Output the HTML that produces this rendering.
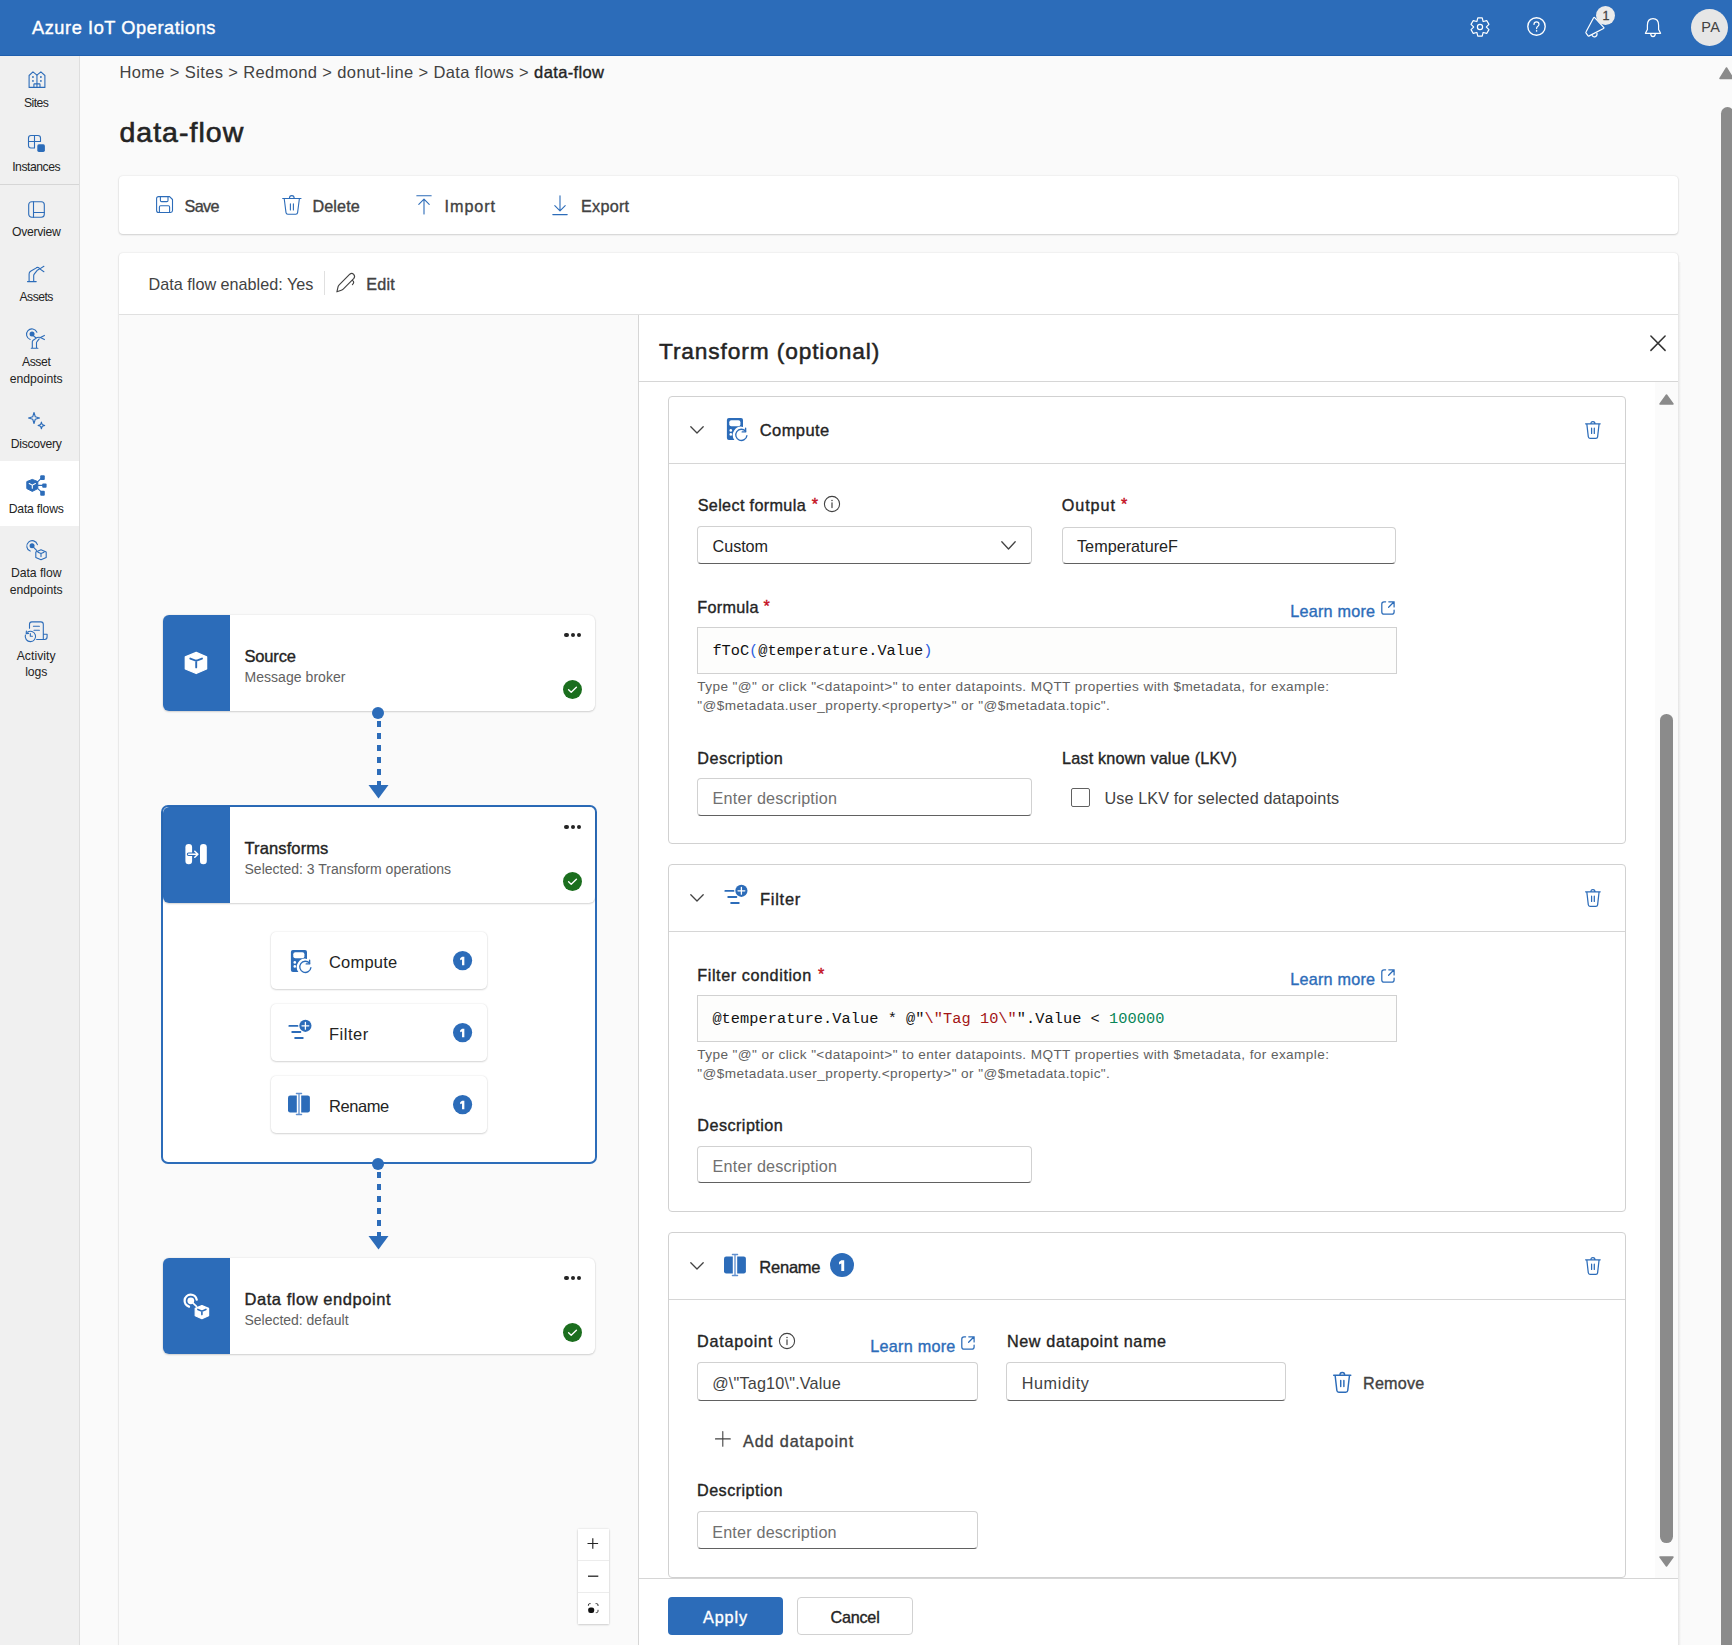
<!DOCTYPE html>
<html><head><meta charset="utf-8">
<style>
*{box-sizing:border-box;margin:0;padding:0}
html,body{width:1732px;height:1645px;overflow:hidden;background:#fafafa;font-family:"Liberation Sans",sans-serif;color:#242424}
.a{position:absolute}
.t{position:absolute;white-space:pre;line-height:1}
svg.i{position:absolute;overflow:visible}
.card{position:absolute;background:#fff;border-radius:4px;box-shadow:0 0 2px rgba(0,0,0,.12),0 1px 2px rgba(0,0,0,.14)}
.inp{position:absolute;background:#fff;border:1px solid #d1d1d1;border-bottom-color:#616161;border-radius:4px}
.sec{position:absolute;left:668px;width:958px;background:#fff;border:1px solid #d1d1d1;border-radius:4px}
.badge{position:absolute;border-radius:50%;background:#2c6cb9}
</style></head><body>
<div class="a" style="left:0;top:0;width:1732px;height:56px;background:#2c6cb9;border-bottom:1px solid #1f5fae"></div>
<div class="a" style="left:1691px;top:8.5px;width:37px;height:37px;border-radius:50%;background:#e6e6e6"></div>
<div class="a" style="left:0;top:56px;width:80px;height:1589px;background:#f0f0f0;border-right:1px solid #dedede"></div>
<div class="a" style="left:0;top:184px;width:79px;height:1px;background:#d6d6d6"></div>
<div class="a" style="left:0;top:461px;width:79px;height:65px;background:#fff"></div>
<div class="card" style="left:119px;top:176px;width:1559px;height:58px"></div>
<div class="card" style="left:119px;top:253px;width:1559px;height:1420px"></div>
<div class="a" style="left:324px;top:271px;width:1px;height:24px;background:#e0e0e0"></div>
<div class="a" style="left:119px;top:314px;width:1559px;height:1px;background:#e0e0e0"></div>
<div class="a" style="left:119px;top:315px;width:519px;height:1330px;background:#fafafa"></div>
<div class="a" style="left:638px;top:315px;width:1px;height:1330px;background:#d6d6d6"></div>
<div class="a" style="left:161px;top:805px;width:436px;height:359px;border:2px solid #2c6cb9;border-radius:7px;background:#fff"></div>
<div class="card" style="left:163px;top:615px;width:432px;height:96px;border-radius:6px;overflow:hidden"><div class="a" style="left:0;top:0;width:67px;height:96px;background:#2c6cb9"></div></div>
<div class="a" style="left:564.2px;top:632.6px;width:4.6px;height:4.6px;border-radius:50%;background:#242424"></div>
<div class="a" style="left:570.5px;top:632.6px;width:4.6px;height:4.6px;border-radius:50%;background:#242424"></div>
<div class="a" style="left:576.8px;top:632.6px;width:4.6px;height:4.6px;border-radius:50%;background:#242424"></div>
<div class="a" style="left:563.2px;top:680.4px;width:19px;height:19px;border-radius:50%;background:#1b6e1e"></div>
<svg class="i" style="left:563.2px;top:680.4px" width="19" height="19" viewBox="0 0 19 19"><path d="M5.6 9.8 L8.2 12.2 L13.4 7.2" fill="none" stroke="#fff" stroke-width="1.4" stroke-linecap="round" stroke-linejoin="round"/></svg>
<div class="card" style="left:163px;top:807px;width:432px;height:96px;border-radius:6px;overflow:hidden"><div class="a" style="left:0;top:0;width:67px;height:96px;background:#2c6cb9"></div></div>
<div class="a" style="left:564.2px;top:824.6px;width:4.6px;height:4.6px;border-radius:50%;background:#242424"></div>
<div class="a" style="left:570.5px;top:824.6px;width:4.6px;height:4.6px;border-radius:50%;background:#242424"></div>
<div class="a" style="left:576.8px;top:824.6px;width:4.6px;height:4.6px;border-radius:50%;background:#242424"></div>
<div class="a" style="left:563.2px;top:872.4px;width:19px;height:19px;border-radius:50%;background:#1b6e1e"></div>
<svg class="i" style="left:563.2px;top:872.4px" width="19" height="19" viewBox="0 0 19 19"><path d="M5.6 9.8 L8.2 12.2 L13.4 7.2" fill="none" stroke="#fff" stroke-width="1.4" stroke-linecap="round" stroke-linejoin="round"/></svg>
<div class="card" style="left:163px;top:1258px;width:432px;height:96px;border-radius:6px;overflow:hidden"><div class="a" style="left:0;top:0;width:67px;height:96px;background:#2c6cb9"></div></div>
<div class="a" style="left:564.2px;top:1275.6px;width:4.6px;height:4.6px;border-radius:50%;background:#242424"></div>
<div class="a" style="left:570.5px;top:1275.6px;width:4.6px;height:4.6px;border-radius:50%;background:#242424"></div>
<div class="a" style="left:576.8px;top:1275.6px;width:4.6px;height:4.6px;border-radius:50%;background:#242424"></div>
<div class="a" style="left:563.2px;top:1323.4px;width:19px;height:19px;border-radius:50%;background:#1b6e1e"></div>
<svg class="i" style="left:563.2px;top:1323.4px" width="19" height="19" viewBox="0 0 19 19"><path d="M5.6 9.8 L8.2 12.2 L13.4 7.2" fill="none" stroke="#fff" stroke-width="1.4" stroke-linecap="round" stroke-linejoin="round"/></svg>
<div class="a" style="left:372px;top:707px;width:12px;height:12px;border-radius:50%;background:#2c6cb9"></div>
<div class="a" style="left:376.5px;top:720.5px;width:4px;height:6.0px;background:#2c6cb9"></div>
<div class="a" style="left:376.5px;top:732.5px;width:4px;height:6.0px;background:#2c6cb9"></div>
<div class="a" style="left:376.5px;top:744.5px;width:4px;height:6.0px;background:#2c6cb9"></div>
<div class="a" style="left:376.5px;top:756.5px;width:4px;height:6.0px;background:#2c6cb9"></div>
<div class="a" style="left:376.5px;top:768.5px;width:4px;height:6.0px;background:#2c6cb9"></div>
<div class="a" style="left:376.5px;top:780.5px;width:4px;height:5.5px;background:#2c6cb9"></div>
<svg class="i" style="left:368px;top:785px" width="21" height="14" viewBox="0 0 21 14"><path d="M0.5 0 H20.5 L10.5 13.5 Z" fill="#2c6cb9"/></svg>
<div class="a" style="left:372px;top:1158.3px;width:12px;height:12px;border-radius:50%;background:#2c6cb9"></div>
<div class="a" style="left:376.5px;top:1171.8px;width:4px;height:6.0px;background:#2c6cb9"></div>
<div class="a" style="left:376.5px;top:1183.8px;width:4px;height:6.0px;background:#2c6cb9"></div>
<div class="a" style="left:376.5px;top:1195.8px;width:4px;height:6.0px;background:#2c6cb9"></div>
<div class="a" style="left:376.5px;top:1207.8px;width:4px;height:6.0px;background:#2c6cb9"></div>
<div class="a" style="left:376.5px;top:1219.8px;width:4px;height:6.0px;background:#2c6cb9"></div>
<div class="a" style="left:376.5px;top:1231.8px;width:4px;height:5.2px;background:#2c6cb9"></div>
<svg class="i" style="left:368px;top:1236px" width="21" height="14" viewBox="0 0 21 14"><path d="M0.5 0 H20.5 L10.5 13.5 Z" fill="#2c6cb9"/></svg>
<div class="card" style="left:271px;top:932px;width:216px;height:57px;border-radius:5px"></div>
<svg class="i" style="left:452.70px;top:951.00px" width="19.2" height="19.2" viewBox="0 0 24 24"><circle cx="12" cy="12" r="12" fill="#2c6cb9"/><path d="M11.3 7.2 H14.2 V17.9 H11.3 V10.6 L9 11.5 V9 Z" fill="#fff"/></svg>
<div class="card" style="left:271px;top:1004px;width:216px;height:57px;border-radius:5px"></div>
<svg class="i" style="left:452.70px;top:1023.00px" width="19.2" height="19.2" viewBox="0 0 24 24"><circle cx="12" cy="12" r="12" fill="#2c6cb9"/><path d="M11.3 7.2 H14.2 V17.9 H11.3 V10.6 L9 11.5 V9 Z" fill="#fff"/></svg>
<div class="card" style="left:271px;top:1076px;width:216px;height:57px;border-radius:5px"></div>
<svg class="i" style="left:452.70px;top:1095.00px" width="19.2" height="19.2" viewBox="0 0 24 24"><circle cx="12" cy="12" r="12" fill="#2c6cb9"/><path d="M11.3 7.2 H14.2 V17.9 H11.3 V10.6 L9 11.5 V9 Z" fill="#fff"/></svg>
<div class="card" style="left:578px;top:1529px;width:31px;height:95px;border-radius:0"></div>
<div class="a" style="left:578px;top:1560px;width:31px;height:1px;background:#ececec"></div>
<div class="a" style="left:578px;top:1592px;width:31px;height:1px;background:#ececec"></div>
<div class="a" style="left:639px;top:315px;width:1039px;height:1330px;background:#fff"></div>
<div class="a" style="left:1678px;top:262px;width:3px;height:1383px;background:linear-gradient(90deg,#e4e4e4,#fafafa)"></div>
<div class="a" style="left:639px;top:381px;width:1039px;height:1px;background:#d6d6d6"></div>
<div class="a" style="left:1655px;top:382px;width:23px;height:1196px;background:#fbfbfb"></div>
<svg class="i" style="left:1659px;top:394px" width="15" height="11" viewBox="0 0 15 11"><path d="M7.5 1 L14 10 H1 Z" fill="#8b8b8b" stroke="#8b8b8b" stroke-width="1.5" stroke-linejoin="round"/></svg>
<svg class="i" style="left:1659px;top:1555.5px" width="15" height="11" viewBox="0 0 15 11"><path d="M7.5 10 L14 1 H1 Z" fill="#8b8b8b" stroke="#8b8b8b" stroke-width="1.5" stroke-linejoin="round"/></svg>
<div class="a" style="left:1660px;top:714px;width:12.8px;height:829px;border-radius:6.4px;background:#8b8b8b"></div>
<div class="a" style="left:639px;top:1578px;width:1039px;height:1px;background:#d6d6d6"></div>
<div class="a" style="left:668px;top:1597px;width:115px;height:38px;border-radius:4px;background:#2c6cb9"></div>
<div class="a" style="left:797px;top:1597px;width:116px;height:38px;border-radius:4px;background:#fff;border:1px solid #d1d1d1"></div>
<svg class="i" style="left:1719px;top:67px" width="15" height="13" viewBox="0 0 15 13"><path d="M7.5 1 L14 11.5 H1 Z" fill="#8b8b8b" stroke="#8b8b8b" stroke-width="1.5" stroke-linejoin="round"/></svg>
<div class="a" style="left:1721px;top:107px;width:13px;height:1600px;border-radius:6.5px;background:#8b8b8b"></div>
<div class="sec" style="top:396px;height:448px"></div>
<div class="a" style="left:669px;top:463px;width:956px;height:1px;background:#d6d6d6"></div>
<svg class="i" style="left:690px;top:425.5px" width="14" height="8" viewBox="0 0 14 8"><path d="M0.8 0.8 L7 7 L13.2 0.8" fill="none" stroke="#424242" stroke-width="1.3" stroke-linecap="round" stroke-linejoin="round"/></svg>
<div class="inp" style="left:697.4px;top:526.2px;width:334.9px;height:37.39999999999998px;background:#fff;border-radius:4px"></div>
<svg class="i" style="left:1000.5px;top:541px" width="15" height="9" viewBox="0 0 15 9"><path d="M0.8 0.8 L7.5 8 L14.2 0.8" fill="none" stroke="#424242" stroke-width="1.3" stroke-linecap="round" stroke-linejoin="round"/></svg>
<div class="inp" style="left:1061.8px;top:526.6px;width:334.70000000000005px;height:37.10000000000002px;background:#fff;border-radius:4px"></div>
<div class="inp" style="left:697.3px;top:627.2px;width:699.4000000000001px;height:46.799999999999955px;background:#fdfdfc;border-bottom-color:#d1d1d1;border-radius:0px"></div>
<div class="inp" style="left:697.3px;top:778.3px;width:335.20000000000005px;height:37.30000000000007px;background:#fff;border-radius:4px"></div>
<div class="a" style="left:1071px;top:788.4px;width:19px;height:19px;border:1px solid #616161;border-radius:2px;background:#fff"></div>
<div class="sec" style="top:864px;height:348px"></div>
<div class="a" style="left:669px;top:931px;width:956px;height:1px;background:#d6d6d6"></div>
<svg class="i" style="left:690px;top:893.5px" width="14" height="8" viewBox="0 0 14 8"><path d="M0.8 0.8 L7 7 L13.2 0.8" fill="none" stroke="#424242" stroke-width="1.3" stroke-linecap="round" stroke-linejoin="round"/></svg>
<div class="inp" style="left:697.3px;top:995.1px;width:699.4000000000001px;height:46.999999999999886px;background:#fdfdfc;border-bottom-color:#d1d1d1;border-radius:0px"></div>
<div class="inp" style="left:697.3px;top:1146px;width:335.20000000000005px;height:37.40000000000009px;background:#fff;border-radius:4px"></div>
<div class="sec" style="top:1232px;height:346px"></div>
<div class="a" style="left:669px;top:1299px;width:956px;height:1px;background:#d6d6d6"></div>
<svg class="i" style="left:690px;top:1261.5px" width="14" height="8" viewBox="0 0 14 8"><path d="M0.8 0.8 L7 7 L13.2 0.8" fill="none" stroke="#424242" stroke-width="1.3" stroke-linecap="round" stroke-linejoin="round"/></svg>
<svg class="i" style="left:830.00px;top:1253.00px" width="24" height="24" viewBox="0 0 24 24"><circle cx="12" cy="12" r="12" fill="#2c6cb9"/><path d="M11.3 7.2 H14.2 V17.9 H11.3 V10.6 L9 11.5 V9 Z" fill="#fff"/></svg>
<div class="inp" style="left:697px;top:1362.3px;width:280.79999999999995px;height:38.299999999999955px;background:#fff;border-radius:4px"></div>
<div class="inp" style="left:1006.4px;top:1362.3px;width:279.9px;height:38.299999999999955px;background:#fff;border-radius:4px"></div>
<div class="inp" style="left:697px;top:1511px;width:280.79999999999995px;height:37.90000000000009px;background:#fff;border-radius:4px"></div>
<svg class="i" style="left:1470px;top:17px" width="20" height="20" viewBox="0 0 20 20"><path d="M6.93 4.38 L7.79 0.97 L12.21 0.97 L13.07 4.38 L13.33 4.53 L16.72 3.57 L18.93 7.40 L16.40 9.85 L16.40 10.15 L18.93 12.60 L16.72 16.43 L13.33 15.47 L13.07 15.62 L12.21 19.03 L7.79 19.03 L6.93 15.62 L6.67 15.47 L3.28 16.43 L1.07 12.60 L3.60 10.15 L3.60 9.85 L1.07 7.40 L3.28 3.57 L6.67 4.53 Z" fill="none" stroke="#fff" stroke-width="1.2" stroke-linejoin="round"/><circle cx="10" cy="10" r="2.6" fill="none" stroke="#fff" stroke-width="1.2"/></svg>
<svg class="i" style="left:1527px;top:17.3px" width="19" height="19" viewBox="0 0 19 19"><circle cx="9.5" cy="9.5" r="8.7" fill="none" stroke="#fff" stroke-width="1.4"/><path d="M7 7.4 Q7 4.9 9.5 4.9 Q12 4.9 12 7.2 Q12 8.6 10.6 9.4 Q9.6 10 9.6 11.6" fill="none" stroke="#fff" stroke-width="1.2" stroke-linecap="round"/><circle cx="9.6" cy="13.9" r="0.8" fill="#fff"/></svg>
<svg class="i" style="left:1583px;top:14px" width="26" height="26" viewBox="0 0 26 26"><path d="M10.6 3.8 Q11.2 3.1 11.9 3.8 L20.7 13.3 Q21.3 14 20.5 14.5 L6.2 21.9 Q5.4 22.3 4.9 21.6 L3.1 19.2 Q2.6 18.5 3.1 17.8 Z" fill="none" stroke="#fff" stroke-width="1.2" stroke-linejoin="round"/><path d="M8.8 20.4 Q9.6 23.6 12.4 22.6 Q14.6 21.6 13.9 18.8" fill="none" stroke="#fff" stroke-width="1.2"/></svg>
<div class="a" style="left:1596px;top:6.2px;width:19.2px;height:19.2px;border-radius:50%;background:#ebebeb"></div>
<svg class="i" style="left:1644px;top:17px" width="18" height="22" viewBox="0 0 18 22"><path d="M9 1.6 Q14.6 1.6 14.6 8.2 V12.4 L16.6 16.3 H1.4 L3.4 12.4 V8.2 Q3.4 1.6 9 1.6 Z" fill="none" stroke="#fff" stroke-width="1.2" stroke-linejoin="round"/><path d="M6.6 16.6 Q7 19.6 9 19.6 Q11 19.6 11.4 16.6" fill="none" stroke="#fff" stroke-width="1.2"/></svg>
<svg class="i" style="left:27.5px;top:70.5px" width="18" height="18" viewBox="0 0 18 18"><path d="M1.1 16.4 V4.5 L4.95 0.9 L8.95 4.2 L12.9 0.9 L16.9 4.5 V16.4 Z" stroke="#2c6cb9" stroke-width="1.1" fill="none" stroke-linejoin="round" stroke-linecap="round"/><path d="M8.95 4.2 V16.4 M5.9 16.4 V13.4 Q5.9 12.9 6.4 12.9 H11.5 Q12 12.9 12 13.4 V16.4" stroke="#2c6cb9" stroke-width="1.1" fill="none" stroke-linejoin="round" stroke-linecap="round"/><circle cx="4.95" cy="6" r="0.9" fill="#2c6cb9"/><circle cx="4.95" cy="9.9" r="0.9" fill="#2c6cb9"/><circle cx="12.9" cy="6" r="0.9" fill="#2c6cb9"/><circle cx="12.9" cy="9.9" r="0.9" fill="#2c6cb9"/></svg>
<svg class="i" style="left:28px;top:135px" width="18" height="18" viewBox="0 0 18 18"><path d="M6.5 13 H3 Q0.5 13 0.5 10.5 V3 Q0.5 0.5 3 0.5 H10 Q12.5 0.5 12.5 3 V6.5 H0.5 M6.5 0.5 V13" stroke="#2c6cb9" stroke-width="1.1" fill="none" stroke-linejoin="round" stroke-linecap="round"/><rect x="9.3" y="9.3" width="7.6" height="7.6" rx="1.6" fill="#2c6cb9"/></svg>
<svg class="i" style="left:28px;top:201px" width="17" height="17" viewBox="0 0 17 17"><rect x="0.7" y="0.7" width="15.6" height="15.6" rx="3" stroke="#2c6cb9" stroke-width="1.1" fill="none" stroke-linejoin="round" stroke-linecap="round"/><path d="M5.5 0.7 V16.3 M5.5 11.5 H16.3" stroke="#2c6cb9" stroke-width="1.1" fill="none" stroke-linejoin="round" stroke-linecap="round"/></svg>
<svg class="i" style="left:26px;top:263px" width="20" height="20" viewBox="0 0 20 20"><path d="M1.5 18.6 H10.2 M3.1 18.6 V11 Q3.1 9.3 4.6 8.3 L10.8 4.6 M7.7 18.6 V12.6 Q7.7 11.8 8.4 10.9 L11.2 7.4 Q12 6.6 13 6.4" stroke="#2c6cb9" stroke-width="1.1" fill="none" stroke-linejoin="round" stroke-linecap="round"/><path d="M10.8 4.6 Q12.6 3.9 13.8 5.9 M13.8 5.9 L17.9 3.3 M13.8 5.9 L17.9 8.7" stroke="#2c6cb9" stroke-width="1.1" fill="none" stroke-linejoin="round" stroke-linecap="round"/></svg>
<svg class="i" style="left:20px;top:322px" width="30" height="30" viewBox="0 0 30 30"><path d="M10.2 17.4 A5.4 5.4 0 1 1 16.9 10.2" stroke="#2c6cb9" stroke-width="1.1" fill="none" stroke-linejoin="round" stroke-linecap="round"/><circle cx="12.06" cy="12.06" r="2.5" fill="#2c6cb9"/><path d="M13.5 13.8 L15.5 15.5 M11.3 26.2 H17.9 M12.3 26.2 V19.8 Q12.3 18.8 13.2 18.2 L17 15.6 M16.5 26.2 V20.8 Q16.5 20.1 17 19.6 L19.2 16.9" stroke="#2c6cb9" stroke-width="1.1" fill="none" stroke-linejoin="round" stroke-linecap="round"/><path d="M17 15.6 Q19.5 14.8 20.4 15.6 L24.4 13.4 M20.4 15.6 L24.4 17.6" stroke="#2c6cb9" stroke-width="1.1" fill="none" stroke-linejoin="round" stroke-linecap="round"/></svg>
<svg class="i" style="left:20px;top:404px" width="30" height="30" viewBox="0 0 30 30"><path d="M14.00 8.50 L15.28 12.72 L19.50 14.00 L15.28 15.28 L14.00 19.50 L12.72 15.28 L8.50 14.00 L12.72 12.72 Z" stroke="#2c6cb9" stroke-width="1.1" fill="none" stroke-linejoin="round" stroke-linecap="round"/><path d="M21.40 18.10 L22.24 20.56 L24.70 21.40 L22.24 22.24 L21.40 24.70 L20.56 22.24 L18.10 21.40 L20.56 20.56 Z" stroke="#2c6cb9" stroke-width="1.1" fill="none" stroke-linejoin="round" stroke-linecap="round"/></svg>
<svg class="i" style="left:20px;top:469px" width="30" height="30" viewBox="0 0 30 30"><path d="M12.3 10.4 L17.8 12.6 V19.6 L12.3 22.4 L6.8 19.6 V12.6 Z" fill="#2c6cb9" stroke="#2c6cb9" stroke-width="1" stroke-linejoin="round"/><path d="M9.2 14.6 L12.3 16.2 L15.4 14.6 M12.3 16.2 V19.2" fill="none" stroke="#fff" stroke-width="1.1" stroke-linecap="round"/><path d="M17.8 12.6 L21.6 9 M17.8 16.4 H23 M17.8 19.6 L21.6 23.2" fill="none" stroke="#2c6cb9" stroke-width="1.1"/><rect x="20.2" y="6.2" width="4.6" height="4.8" rx="1" fill="#2c6cb9"/><rect x="22.2" y="14.4" width="4.4" height="4.4" rx="1" fill="#2c6cb9"/><rect x="20.2" y="21.8" width="4.6" height="5" rx="1" fill="#2c6cb9"/></svg>
<svg class="i" style="left:20px;top:534px" width="30" height="30" viewBox="0 0 30 30"><path d="M10.2 17.1 A5.4 5.4 0 1 1 17.4 10.6" stroke="#2c6cb9" stroke-width="1.1" fill="none" stroke-linejoin="round" stroke-linecap="round"/><circle cx="12.06" cy="11.67" r="2.5" fill="#2c6cb9"/><path d="M13.6 13.3 L16.6 16.3" stroke="#2c6cb9" stroke-width="1.1" fill="none" stroke-linejoin="round" stroke-linecap="round"/><path d="M21 15.8 L26.2 18.1 V23.4 L21 25.7 L15.8 23.4 V18.1 Z M18 18.3 L21 19.6 L24 18.3 M21 19.6 V22.6" stroke="#2c6cb9" stroke-width="1.1" fill="none" stroke-linejoin="round" stroke-linecap="round"/></svg>
<svg class="i" style="left:20px;top:615px" width="30" height="30" viewBox="0 0 30 30"><path d="M9.5 13.3 V9.3 Q9.5 6.9 11.9 6.9 H20.9 Q23.3 6.9 23.3 9.3 V24.3 M16.6 24.5 H24.7 Q27.1 24.5 27.1 21.8 V19.3 H23.3 M13.4 11.2 H19.4 M14 15.2 H19.4" stroke="#2c6cb9" stroke-width="1.1" fill="none" stroke-linejoin="round" stroke-linecap="round"/><path d="M5.4 20 A5.2 5.2 0 1 0 7.4 17.2" stroke="#2c6cb9" stroke-width="1.1" fill="none" stroke-linejoin="round" stroke-linecap="round"/><path d="M6.4 16.1 L6.2 18.6 L8.6 18.4" stroke="#2c6cb9" stroke-width="1.1" fill="none" stroke-linejoin="round" stroke-linecap="round"/><path d="M10.3 18.6 V21.3 H12.4" stroke="#2c6cb9" stroke-width="1.1" fill="none" stroke-linejoin="round" stroke-linecap="round"/></svg>
<svg class="i" style="left:156px;top:196px" width="18" height="18" viewBox="0 0 18 18"><path d="M2.6 0.6 H13.6 L16.5 3.5 V14.6 Q16.5 16.5 14.6 16.5 H2.6 Q0.6 16.5 0.6 14.6 V2.6 Q0.6 0.6 2.6 0.6 Z M4.4 0.6 V4.4 Q4.4 5.6 5.6 5.6 H10.8 Q12 5.6 12 4.4 V0.6 M3.4 16.5 V10.9 Q3.4 9.7 4.6 9.7 H12.4 Q13.6 9.7 13.6 10.9 V16.5" fill="none" stroke="#2c6cb9" stroke-width="1.1" stroke-linejoin="round" stroke-linecap="round"/></svg>
<svg class="i" style="left:282px;top:195px" width="20" height="20" viewBox="0 0 20 20"><path d="M0.7 3.5 H19 M2.2 3.5 L4 17.6 Q4.2 19.2 5.8 19.2 H13.8 Q15.4 19.2 15.6 17.6 L17.4 3.5 M7.4 3.5 Q7.4 0.6 9.8 0.6 Q12.2 0.6 12.2 3.5 M8.4 8.9 V14.9 M11.4 8.9 V14.9" fill="none" stroke="#2c6cb9" stroke-width="1.1" stroke-linejoin="round" stroke-linecap="round"/></svg>
<svg class="i" style="left:416px;top:195px" width="17" height="20" viewBox="0 0 17 20"><path d="M0.8 0.8 H15.2 M8 4.2 V19 M2.8 9.4 L8 4.2 L13.2 9.4" fill="none" stroke="#2c6cb9" stroke-width="1.1" stroke-linejoin="round" stroke-linecap="round"/></svg>
<svg class="i" style="left:552px;top:195px" width="17" height="21" viewBox="0 0 17 21"><path d="M0.8 19.6 H15.2 M8 0.8 V15.8 M2.8 10.6 L8 15.8 L13.2 10.6" fill="none" stroke="#2c6cb9" stroke-width="1.1" stroke-linejoin="round" stroke-linecap="round"/></svg>
<svg class="i" style="left:330px;top:268px" width="30" height="30" viewBox="0 0 30 30"><path d="M6.9 23.8 L8.1 18.7 Q8.4 17.6 9.2 16.8 L19.8 6.2 Q21.8 4.6 23.7 6.4 Q25.4 8.4 23.9 10.4 L13.2 21.1 Q12.4 21.9 11.3 22.2 Z M22.7 12.6 Q24.8 14.3 22.4 16.6" fill="none" stroke="#424242" stroke-width="1.15" stroke-linejoin="round" stroke-linecap="round"/></svg>
<svg class="i" style="left:176px;top:640px" width="40" height="40" viewBox="0 0 40 40"><path d="M20.2 12.4 L30.6 16.8 V29 L20.2 33.5 L9.3 29 V16.8 Z" fill="#fff" stroke="#fff" stroke-width="1.3" stroke-linejoin="round"/><path d="M14.3 18.6 L20.2 20.8 L26 18.6 M20.2 20.8 V27.4" fill="none" stroke="#2c6cb9" stroke-width="1.9" stroke-linecap="round"/></svg>
<svg class="i" style="left:176px;top:834px" width="40" height="40" viewBox="0 0 40 40"><rect x="9.4" y="10.1" width="6.7" height="20.1" rx="3.3" fill="#fff"/><rect x="24" y="10.1" width="6.8" height="20.1" rx="3.3" fill="#fff"/><path d="M12.6 20.3 H21.8 M18.8 17.3 L21.9 20.3 L18.8 23.3" fill="none" stroke="#2c6cb9" stroke-width="3.6" stroke-linecap="round" stroke-linejoin="round"/><path d="M12.6 20.3 H21.8 M18.8 17.3 L21.9 20.3 L18.8 23.3" fill="none" stroke="#fff" stroke-width="1.5" stroke-linecap="round" stroke-linejoin="round"/></svg>
<svg class="i" style="left:176px;top:1285px" width="40" height="40" viewBox="0 0 40 40"><path d="M13 21.6 A6.1 6.1 0 1 1 20.7 14.6" fill="none" stroke="#fff" stroke-width="2.3" stroke-linecap="round"/><circle cx="14.8" cy="15.8" r="3.4" fill="#fff"/><path d="M16.8 17.8 L21 21.8" stroke="#fff" stroke-width="1.6"/><path d="M25.9 20.6 L32.6 23.4 V30.8 L25.9 33.7 L19.2 30.8 V23.4 Z" fill="#fff" stroke="#fff" stroke-width="1.2" stroke-linejoin="round"/><path d="M21.9 24.4 L25.9 26.2 L29.9 24.4 M25.9 26.2 V29.6" fill="none" stroke="#2c6cb9" stroke-width="1.6" stroke-linecap="round"/></svg>
<svg class="i" style="left:722px;top:414px" width="30" height="30" viewBox="0 0 30 30"><g transform="scale(1)"><path d="M6.9 4 H19 Q21 4 21 6 V12.9 A8.3 8.3 0 0 0 12.4 25.9 H6.9 Q4.9 25.9 4.9 23.9 V6 Q4.9 4 6.9 4 Z" fill="#2c6cb9"/><rect x="7.3" y="6.2" width="11.1" height="6" rx="2" fill="#fff"/><circle cx="8.8" cy="16.4" r="1.3" fill="#fff"/><circle cx="8.8" cy="20.4" r="1.3" fill="#fff"/><path d="M23.6 17.2 A5.6 5.6 0 1 0 24.9 21.6" fill="none" stroke="#2c6cb9" stroke-width="1.3" stroke-linecap="round"/><path d="M23.6 14.2 V17.9 H20.2" fill="none" stroke="#2c6cb9" stroke-width="1.4" stroke-linecap="round" stroke-linejoin="round"/></g></svg>
<svg class="i" style="left:720px;top:880px" width="30" height="30" viewBox="0 0 30 30"><path d="M5.3 10.9 H13.5 M8.2 17 H16.4 M11.1 23 H18.8" stroke="#2c6cb9" stroke-width="1.8" stroke-linecap="round"/><circle cx="21.4" cy="10.8" r="6.4" fill="#fff"/><circle cx="21.4" cy="10.8" r="6.1" fill="#2c6cb9"/><path d="M21.4 7.4 V14.2 M18 10.8 H24.8" stroke="#fff" stroke-width="1.3" stroke-linecap="round"/></svg>
<svg class="i" style="left:720px;top:1250px" width="30" height="30" viewBox="0 0 30 30"><path d="M12.8 6.6 H6.2 Q4 6.6 4 8.8 V21.3 Q4 23.5 6.2 23.5 H12.8 Z" fill="#2c6cb9"/><path d="M17.2 6.6 H23.7 Q25.9 6.6 25.9 8.8 V21.3 Q25.9 23.5 23.7 23.5 H17.2 Z" fill="#2c6cb9"/><path d="M15 5 V25 M12.4 4.5 H17.6 M12.4 25.5 H17.6" stroke="#5f8fcf" stroke-width="1.3" stroke-linecap="round"/></svg>
<svg class="i" style="left:286px;top:946px" width="30" height="30" viewBox="0 0 30 30"><g transform="scale(1)"><path d="M6.9 4 H19 Q21 4 21 6 V12.9 A8.3 8.3 0 0 0 12.4 25.9 H6.9 Q4.9 25.9 4.9 23.9 V6 Q4.9 4 6.9 4 Z" fill="#2c6cb9"/><rect x="7.3" y="6.2" width="11.1" height="6" rx="2" fill="#fff"/><circle cx="8.8" cy="16.4" r="1.3" fill="#fff"/><circle cx="8.8" cy="20.4" r="1.3" fill="#fff"/><path d="M23.6 17.2 A5.6 5.6 0 1 0 24.9 21.6" fill="none" stroke="#2c6cb9" stroke-width="1.3" stroke-linecap="round"/><path d="M23.6 14.2 V17.9 H20.2" fill="none" stroke="#2c6cb9" stroke-width="1.4" stroke-linecap="round" stroke-linejoin="round"/></g></svg>
<svg class="i" style="left:284px;top:1015px" width="30" height="30" viewBox="0 0 30 30"><path d="M5.3 10.9 H13.5 M8.2 17 H16.4 M11.1 23 H18.8" stroke="#2c6cb9" stroke-width="1.8" stroke-linecap="round"/><circle cx="21.4" cy="10.8" r="6.4" fill="#fff"/><circle cx="21.4" cy="10.8" r="6.1" fill="#2c6cb9"/><path d="M21.4 7.4 V14.2 M18 10.8 H24.8" stroke="#fff" stroke-width="1.3" stroke-linecap="round"/></svg>
<svg class="i" style="left:284px;top:1089px" width="30" height="30" viewBox="0 0 30 30"><path d="M12.8 6.6 H6.2 Q4 6.6 4 8.8 V21.3 Q4 23.5 6.2 23.5 H12.8 Z" fill="#2c6cb9"/><path d="M17.2 6.6 H23.7 Q25.9 6.6 25.9 8.8 V21.3 Q25.9 23.5 23.7 23.5 H17.2 Z" fill="#2c6cb9"/><path d="M15 5 V25 M12.4 4.5 H17.6 M12.4 25.5 H17.6" stroke="#5f8fcf" stroke-width="1.3" stroke-linecap="round"/></svg>
<svg class="i" style="left:1640px;top:330px" width="32" height="32" viewBox="0 0 32 32"><path d="M10.9 6 L25.1 20.4 M25.1 6 L10.9 20.4" stroke="#333" stroke-width="1.5" stroke-linecap="round"/></svg>
<svg class="i" style="left:1585px;top:421px" width="16" height="18" viewBox="0 0 16 18"><g transform="scale(1.0)"><path d="M0.6 2.8 H15.2 M1.8 2.8 L3.3 15.8 Q3.5 17.3 5 17.3 H10.9 Q12.4 17.3 12.6 15.8 L14.1 2.8 M5.9 2.8 Q5.9 0.5 7.95 0.5 Q10 0.5 10 2.8 M6.6 7.2 V12.4 M9.3 7.2 V12.4" fill="none" stroke="#2c6cb9" stroke-width="1.25" stroke-linejoin="round" stroke-linecap="round"/></g></svg>
<svg class="i" style="left:1585px;top:889px" width="16" height="18" viewBox="0 0 16 18"><g transform="scale(1.0)"><path d="M0.6 2.8 H15.2 M1.8 2.8 L3.3 15.8 Q3.5 17.3 5 17.3 H10.9 Q12.4 17.3 12.6 15.8 L14.1 2.8 M5.9 2.8 Q5.9 0.5 7.95 0.5 Q10 0.5 10 2.8 M6.6 7.2 V12.4 M9.3 7.2 V12.4" fill="none" stroke="#2c6cb9" stroke-width="1.25" stroke-linejoin="round" stroke-linecap="round"/></g></svg>
<svg class="i" style="left:1585px;top:1257px" width="16" height="18" viewBox="0 0 16 18"><g transform="scale(1.0)"><path d="M0.6 2.8 H15.2 M1.8 2.8 L3.3 15.8 Q3.5 17.3 5 17.3 H10.9 Q12.4 17.3 12.6 15.8 L14.1 2.8 M5.9 2.8 Q5.9 0.5 7.95 0.5 Q10 0.5 10 2.8 M6.6 7.2 V12.4 M9.3 7.2 V12.4" fill="none" stroke="#2c6cb9" stroke-width="1.25" stroke-linejoin="round" stroke-linecap="round"/></g></svg>
<svg class="i" style="left:1333px;top:1371.5px" width="19" height="21" viewBox="0 0 19 21"><g transform="scale(1.17)"><path d="M0.6 2.8 H15.2 M1.8 2.8 L3.3 15.8 Q3.5 17.3 5 17.3 H10.9 Q12.4 17.3 12.6 15.8 L14.1 2.8 M5.9 2.8 Q5.9 0.5 7.95 0.5 Q10 0.5 10 2.8 M6.6 7.2 V12.4 M9.3 7.2 V12.4" fill="none" stroke="#2c6cb9" stroke-width="1.25" stroke-linejoin="round" stroke-linecap="round"/></g></svg>
<svg class="i" style="left:823.3px;top:495.3px" width="18" height="18" viewBox="0 0 18 18"><circle cx="9" cy="9" r="7.6" fill="none" stroke="#424242" stroke-width="1.1"/><path d="M9 7.8 V12.6" stroke="#424242" stroke-width="1.2" stroke-linecap="round"/><circle cx="9" cy="5.6" r="0.75" fill="#424242"/></svg>
<svg class="i" style="left:778px;top:1332px" width="18" height="18" viewBox="0 0 18 18"><circle cx="9" cy="9" r="7.6" fill="none" stroke="#424242" stroke-width="1.1"/><path d="M9 7.8 V12.6" stroke="#424242" stroke-width="1.2" stroke-linecap="round"/><circle cx="9" cy="5.6" r="0.75" fill="#424242"/></svg>
<svg class="i" style="left:1381px;top:601px" width="16" height="16" viewBox="0 0 16 16"><path d="M4.6 0.8 H3 Q0.8 0.8 0.8 3 V10.9 Q0.8 13.1 3 13.1 H10.9 Q13.1 13.1 13.1 10.9 V9.2 M7.8 0.8 H13.1 V5.9 M13.1 0.8 L7.6 6.3" fill="none" stroke="#2c6cb9" stroke-width="1.25" stroke-linecap="round" stroke-linejoin="round"/></svg>
<svg class="i" style="left:1381px;top:969px" width="16" height="16" viewBox="0 0 16 16"><path d="M4.6 0.8 H3 Q0.8 0.8 0.8 3 V10.9 Q0.8 13.1 3 13.1 H10.9 Q13.1 13.1 13.1 10.9 V9.2 M7.8 0.8 H13.1 V5.9 M13.1 0.8 L7.6 6.3" fill="none" stroke="#2c6cb9" stroke-width="1.25" stroke-linecap="round" stroke-linejoin="round"/></svg>
<svg class="i" style="left:961px;top:1336px" width="16" height="16" viewBox="0 0 16 16"><path d="M4.6 0.8 H3 Q0.8 0.8 0.8 3 V10.9 Q0.8 13.1 3 13.1 H10.9 Q13.1 13.1 13.1 10.9 V9.2 M7.8 0.8 H13.1 V5.9 M13.1 0.8 L7.6 6.3" fill="none" stroke="#2c6cb9" stroke-width="1.25" stroke-linecap="round" stroke-linejoin="round"/></svg>
<svg class="i" style="left:714px;top:1430px" width="18" height="18" viewBox="0 0 18 18"><path d="M8.8 1.5 V16.3 M1.5 8.9 H16.3" stroke="#424242" stroke-width="1.1" stroke-linecap="round"/></svg>
<svg class="i" style="left:578px;top:1529px" width="31" height="32" viewBox="0 0 31 32"><path d="M14.8 9.2 V19.8 M9.5 14.5 H20.1" stroke="#242424" stroke-width="1.15"/></svg>
<svg class="i" style="left:578px;top:1561px" width="31" height="32" viewBox="0 0 31 32"><path d="M10 15.2 H20.3" stroke="#242424" stroke-width="1.3"/></svg>
<svg class="i" style="left:578px;top:1593px" width="31" height="32" viewBox="0 0 31 32"><path d="M12.6 10.6 H11.8 Q10.4 10.6 10.4 12 V12.8 M17.6 10.6 H18.6 Q20 10.6 20 12 V13 M20 16.8 V18.2 Q20 19.6 18.6 19.6 H17.8" fill="none" stroke="#242424" stroke-width="0.9"/><rect x="10.2" y="14.4" width="6" height="5.6" rx="2.2" fill="#111"/></svg>
<div id="tx0" class="t" style="left:32.00px;top:19.39px;font-size:18.2px;font-weight:400;color:#fff;-webkit-text-stroke:0.400px #fff;font-family:&quot;Liberation Sans&quot;;letter-spacing:0.573px;">Azure IoT Operations</div>
<div id="tx1" class="t" style="left:1701.20px;top:20.13px;font-size:14.5px;font-weight:400;color:#424242;font-family:&quot;Liberation Sans&quot;;letter-spacing:0.359px;">PA</div>
<div id="tx2" class="t" style="left:24.05px;top:96.67px;font-size:12.2px;font-weight:400;color:#242424;font-family:&quot;Liberation Sans&quot;;letter-spacing:-0.562px;">Sites</div>
<div id="tx3" class="t" style="left:12.20px;top:160.67px;font-size:12.2px;font-weight:400;color:#242424;font-family:&quot;Liberation Sans&quot;;letter-spacing:-0.464px;">Instances</div>
<div id="tx4" class="t" style="left:11.95px;top:226.47px;font-size:12.2px;font-weight:400;color:#242424;font-family:&quot;Liberation Sans&quot;;letter-spacing:-0.287px;">Overview</div>
<div id="tx5" class="t" style="left:19.45px;top:290.67px;font-size:12.2px;font-weight:400;color:#242424;font-family:&quot;Liberation Sans&quot;;letter-spacing:-0.513px;">Assets</div>
<div id="tx6" class="t" style="left:21.95px;top:355.87px;font-size:12.2px;font-weight:400;color:#242424;font-family:&quot;Liberation Sans&quot;;letter-spacing:-0.397px;">Asset</div>
<div id="tx7" class="t" style="left:9.70px;top:372.57px;font-size:12.2px;font-weight:400;color:#242424;font-family:&quot;Liberation Sans&quot;;letter-spacing:0.016px;">endpoints</div>
<div id="tx8" class="t" style="left:10.70px;top:437.97px;font-size:12.2px;font-weight:400;color:#242424;font-family:&quot;Liberation Sans&quot;;letter-spacing:-0.278px;">Discovery</div>
<div id="tx9" class="t" style="left:8.70px;top:502.67px;font-size:12.2px;font-weight:400;color:#242424;font-family:&quot;Liberation Sans&quot;;letter-spacing:-0.191px;">Data flows</div>
<div id="tx10" class="t" style="left:10.95px;top:566.77px;font-size:12.2px;font-weight:400;color:#242424;font-family:&quot;Liberation Sans&quot;;letter-spacing:-0.035px;">Data flow</div>
<div id="tx11" class="t" style="left:9.70px;top:583.67px;font-size:12.2px;font-weight:400;color:#242424;font-family:&quot;Liberation Sans&quot;;letter-spacing:0.016px;">endpoints</div>
<div id="tx12" class="t" style="left:16.70px;top:649.67px;font-size:12.2px;font-weight:400;color:#242424;font-family:&quot;Liberation Sans&quot;;letter-spacing:0.049px;">Activity</div>
<div id="tx13" class="t" style="left:25.20px;top:666.17px;font-size:12.2px;font-weight:400;color:#242424;font-family:&quot;Liberation Sans&quot;;letter-spacing:-0.090px;">logs</div>
<div id="tx14" class="t" style="left:119.40px;top:63.83px;font-size:16.5px;font-weight:400;color:#424242;font-family:&quot;Liberation Sans&quot;;letter-spacing:0.371px;">Home &gt; Sites &gt; Redmond &gt; donut-line &gt; Data flows &gt; <span style="color:#242424;-webkit-text-stroke:0.36px #242424">data-flow</span></div>
<div id="tx15" class="t" style="left:119.40px;top:118.17px;font-size:28.5px;font-weight:400;color:#242424;-webkit-text-stroke:0.627px #242424;font-family:&quot;Liberation Sans&quot;;letter-spacing:1.038px;">data-flow</div>
<div id="tx16" class="t" style="left:184.60px;top:198.09px;font-size:16.2px;font-weight:400;color:#424242;-webkit-text-stroke:0.356px #424242;font-family:&quot;Liberation Sans&quot;;letter-spacing:-0.677px;">Save</div>
<div id="tx17" class="t" style="left:312.40px;top:198.09px;font-size:16.2px;font-weight:400;color:#424242;-webkit-text-stroke:0.356px #424242;font-family:&quot;Liberation Sans&quot;;letter-spacing:0.134px;">Delete</div>
<div id="tx18" class="t" style="left:444.60px;top:198.09px;font-size:16.2px;font-weight:400;color:#424242;-webkit-text-stroke:0.356px #424242;font-family:&quot;Liberation Sans&quot;;letter-spacing:0.918px;">Import</div>
<div id="tx19" class="t" style="left:581.00px;top:198.09px;font-size:16.2px;font-weight:400;color:#424242;-webkit-text-stroke:0.356px #424242;font-family:&quot;Liberation Sans&quot;;letter-spacing:0.267px;">Export</div>
<div id="tx20" class="t" style="left:148.60px;top:275.89px;font-size:16.2px;font-weight:400;color:#424242;font-family:&quot;Liberation Sans&quot;;letter-spacing:-0.000px;">Data flow enabled: Yes</div>
<div id="tx21" class="t" style="left:366.30px;top:275.89px;font-size:16.2px;font-weight:400;color:#424242;-webkit-text-stroke:0.356px #424242;font-family:&quot;Liberation Sans&quot;;letter-spacing:0.173px;">Edit</div>
<div id="tx22" class="t" style="left:244.50px;top:647.53px;font-size:16.5px;font-weight:400;color:#242424;-webkit-text-stroke:0.363px #242424;font-family:&quot;Liberation Sans&quot;;letter-spacing:-0.180px;">Source</div>
<div id="tx23" class="t" style="left:244.50px;top:669.65px;font-size:14px;font-weight:400;color:#616161;font-family:&quot;Liberation Sans&quot;;letter-spacing:0.044px;">Message broker</div>
<div id="tx24" class="t" style="left:244.50px;top:839.53px;font-size:16.5px;font-weight:400;color:#242424;-webkit-text-stroke:0.363px #242424;font-family:&quot;Liberation Sans&quot;;letter-spacing:0.117px;">Transforms</div>
<div id="tx25" class="t" style="left:244.50px;top:861.65px;font-size:14px;font-weight:400;color:#616161;font-family:&quot;Liberation Sans&quot;;letter-spacing:0.011px;">Selected: 3 Transform operations</div>
<div id="tx26" class="t" style="left:244.50px;top:1290.53px;font-size:16.5px;font-weight:400;color:#242424;-webkit-text-stroke:0.363px #242424;font-family:&quot;Liberation Sans&quot;;letter-spacing:0.551px;">Data flow endpoint</div>
<div id="tx27" class="t" style="left:244.50px;top:1312.65px;font-size:14px;font-weight:400;color:#616161;font-family:&quot;Liberation Sans&quot;;letter-spacing:-0.017px;">Selected: default</div>
<div id="tx28" class="t" style="left:328.90px;top:954.03px;font-size:16.5px;font-weight:400;color:#242424;font-family:&quot;Liberation Sans&quot;;letter-spacing:0.221px;">Compute</div>
<div id="tx29" class="t" style="left:328.90px;top:1026.03px;font-size:16.5px;font-weight:400;color:#242424;font-family:&quot;Liberation Sans&quot;;letter-spacing:0.555px;">Filter</div>
<div id="tx30" class="t" style="left:328.90px;top:1098.03px;font-size:16.5px;font-weight:400;color:#242424;font-family:&quot;Liberation Sans&quot;;letter-spacing:-0.396px;">Rename</div>
<div id="tx31" class="t" style="left:659.00px;top:340.48px;font-size:22.7px;font-weight:400;color:#242424;-webkit-text-stroke:0.499px #242424;font-family:&quot;Liberation Sans&quot;;letter-spacing:0.889px;">Transform (optional)</div>
<div id="tx32" class="t" style="left:703.00px;top:1609.29px;font-size:16.2px;font-weight:400;color:#fff;-webkit-text-stroke:0.356px #fff;font-family:&quot;Liberation Sans&quot;;letter-spacing:0.900px;">Apply</div>
<div id="tx33" class="t" style="left:830.50px;top:1609.29px;font-size:16.2px;font-weight:400;color:#242424;-webkit-text-stroke:0.356px #242424;font-family:&quot;Liberation Sans&quot;;letter-spacing:-0.232px;">Cancel</div>
<div id="tx34" class="t" style="left:759.70px;top:422.13px;font-size:16.5px;font-weight:400;color:#242424;-webkit-text-stroke:0.363px #242424;font-family:&quot;Liberation Sans&quot;;letter-spacing:0.435px;">Compute</div>
<div id="tx35" class="t" style="left:697.70px;top:497.29px;font-size:16.2px;font-weight:400;color:#242424;-webkit-text-stroke:0.356px #242424;font-family:&quot;Liberation Sans&quot;;letter-spacing:0.345px;">Select formula</div>
<div id="tx36" class="t" style="left:811.70px;top:496.29px;font-size:16.2px;font-weight:400;color:#c50f1f;-webkit-text-stroke:0.356px #c50f1f;font-family:&quot;Liberation Sans&quot;;letter-spacing:0.000px;">*</div>
<div id="tx37" class="t" style="left:1061.80px;top:497.29px;font-size:16.2px;font-weight:400;color:#242424;-webkit-text-stroke:0.356px #242424;font-family:&quot;Liberation Sans&quot;;letter-spacing:0.898px;">Output</div>
<div id="tx38" class="t" style="left:1121.00px;top:496.29px;font-size:16.2px;font-weight:400;color:#c50f1f;-webkit-text-stroke:0.356px #c50f1f;font-family:&quot;Liberation Sans&quot;;letter-spacing:0.000px;">*</div>
<div id="tx39" class="t" style="left:712.60px;top:538.09px;font-size:16.2px;font-weight:400;color:#242424;font-family:&quot;Liberation Sans&quot;;letter-spacing:-0.064px;">Custom</div>
<div id="tx40" class="t" style="left:1077.00px;top:538.09px;font-size:16.2px;font-weight:400;color:#242424;font-family:&quot;Liberation Sans&quot;;letter-spacing:0.020px;">TemperatureF</div>
<div id="tx41" class="t" style="left:697.30px;top:599.19px;font-size:16.2px;font-weight:400;color:#242424;-webkit-text-stroke:0.356px #242424;font-family:&quot;Liberation Sans&quot;;letter-spacing:0.289px;">Formula</div>
<div id="tx42" class="t" style="left:763.50px;top:598.29px;font-size:16.2px;font-weight:400;color:#c50f1f;-webkit-text-stroke:0.356px #c50f1f;font-family:&quot;Liberation Sans&quot;;letter-spacing:0.000px;">*</div>
<div id="tx43" class="t" style="left:1290.30px;top:603.29px;font-size:16.2px;font-weight:400;color:#2c6cb9;-webkit-text-stroke:0.356px #2c6cb9;font-family:&quot;Liberation Sans&quot;;letter-spacing:0.222px;">Learn more</div>
<div id="tx44" class="t" style="left:712.40px;top:643.85px;font-size:15.3px;font-weight:400;color:#111;font-family:&quot;Liberation Mono&quot;;letter-spacing:-0.014px;">fToC<span style="color:#2f5fe0">(</span>@temperature.Value<span style="color:#2f5fe0">)</span></div>
<div id="tx45" class="t" style="left:697.30px;top:680.39px;font-size:13.6px;font-weight:400;color:#616161;font-family:&quot;Liberation Sans&quot;;letter-spacing:0.405px;">Type "@" or click "&lt;datapoint&gt;" to enter datapoints. MQTT properties with $metadata, for example:</div>
<div id="tx46" class="t" style="left:697.30px;top:699.29px;font-size:13.6px;font-weight:400;color:#616161;font-family:&quot;Liberation Sans&quot;;letter-spacing:0.426px;">"@$metadata.user_property.&lt;property&gt;" or "@$metadata.topic".</div>
<div id="tx47" class="t" style="left:697.30px;top:749.69px;font-size:16.2px;font-weight:400;color:#242424;-webkit-text-stroke:0.356px #242424;font-family:&quot;Liberation Sans&quot;;letter-spacing:0.456px;">Description</div>
<div id="tx48" class="t" style="left:1062.00px;top:749.69px;font-size:16.2px;font-weight:400;color:#242424;-webkit-text-stroke:0.356px #242424;font-family:&quot;Liberation Sans&quot;;letter-spacing:0.183px;">Last known value (LKV)</div>
<div id="tx49" class="t" style="left:712.60px;top:790.09px;font-size:16.2px;font-weight:400;color:#707070;font-family:&quot;Liberation Sans&quot;;letter-spacing:0.183px;">Enter description</div>
<div id="tx50" class="t" style="left:1104.50px;top:790.09px;font-size:16.2px;font-weight:400;color:#424242;font-family:&quot;Liberation Sans&quot;;letter-spacing:0.111px;">Use LKV for selected datapoints</div>
<div id="tx51" class="t" style="left:760.00px;top:890.93px;font-size:16.5px;font-weight:400;color:#242424;-webkit-text-stroke:0.363px #242424;font-family:&quot;Liberation Sans&quot;;letter-spacing:0.721px;">Filter</div>
<div id="tx52" class="t" style="left:697.30px;top:966.99px;font-size:16.2px;font-weight:400;color:#242424;-webkit-text-stroke:0.356px #242424;font-family:&quot;Liberation Sans&quot;;letter-spacing:0.576px;">Filter condition</div>
<div id="tx53" class="t" style="left:818.00px;top:966.29px;font-size:16.2px;font-weight:400;color:#c50f1f;-webkit-text-stroke:0.356px #c50f1f;font-family:&quot;Liberation Sans&quot;;letter-spacing:0.000px;">*</div>
<div id="tx54" class="t" style="left:1290.30px;top:971.29px;font-size:16.2px;font-weight:400;color:#2c6cb9;-webkit-text-stroke:0.356px #2c6cb9;font-family:&quot;Liberation Sans&quot;;letter-spacing:0.222px;">Learn more</div>
<div id="tx55" class="t" style="left:712.40px;top:1011.55px;font-size:15.3px;font-weight:400;color:#111;font-family:&quot;Liberation Mono&quot;;letter-spacing:0.045px;">@temperature.Value * @"<span style="color:#a31515">\"Tag 10\"</span>".Value &lt; <span style="color:#098658">100000</span></div>
<div id="tx56" class="t" style="left:697.30px;top:1048.09px;font-size:13.6px;font-weight:400;color:#616161;font-family:&quot;Liberation Sans&quot;;letter-spacing:0.405px;">Type "@" or click "&lt;datapoint&gt;" to enter datapoints. MQTT properties with $metadata, for example:</div>
<div id="tx57" class="t" style="left:697.30px;top:1066.99px;font-size:13.6px;font-weight:400;color:#616161;font-family:&quot;Liberation Sans&quot;;letter-spacing:0.426px;">"@$metadata.user_property.&lt;property&gt;" or "@$metadata.topic".</div>
<div id="tx58" class="t" style="left:697.30px;top:1117.49px;font-size:16.2px;font-weight:400;color:#242424;-webkit-text-stroke:0.356px #242424;font-family:&quot;Liberation Sans&quot;;letter-spacing:0.456px;">Description</div>
<div id="tx59" class="t" style="left:712.60px;top:1157.79px;font-size:16.2px;font-weight:400;color:#707070;font-family:&quot;Liberation Sans&quot;;letter-spacing:0.183px;">Enter description</div>
<div id="tx60" class="t" style="left:759.30px;top:1259.13px;font-size:16.5px;font-weight:400;color:#242424;-webkit-text-stroke:0.363px #242424;font-family:&quot;Liberation Sans&quot;;letter-spacing:-0.229px;">Rename</div>
<div id="tx61" class="t" style="left:697.00px;top:1333.29px;font-size:16.2px;font-weight:400;color:#242424;-webkit-text-stroke:0.356px #242424;font-family:&quot;Liberation Sans&quot;;letter-spacing:0.745px;">Datapoint</div>
<div id="tx62" class="t" style="left:870.20px;top:1337.89px;font-size:16.2px;font-weight:400;color:#2c6cb9;-webkit-text-stroke:0.356px #2c6cb9;font-family:&quot;Liberation Sans&quot;;letter-spacing:0.262px;">Learn more</div>
<div id="tx63" class="t" style="left:1006.90px;top:1333.29px;font-size:16.2px;font-weight:400;color:#242424;-webkit-text-stroke:0.356px #242424;font-family:&quot;Liberation Sans&quot;;letter-spacing:0.629px;">New datapoint name</div>
<div id="tx64" class="t" style="left:712.20px;top:1374.89px;font-size:16.2px;font-weight:400;color:#424242;font-family:&quot;Liberation Sans&quot;;letter-spacing:0.192px;">@\&quot;Tag10\&quot;.Value</div>
<div id="tx65" class="t" style="left:1021.70px;top:1374.89px;font-size:16.2px;font-weight:400;color:#424242;font-family:&quot;Liberation Sans&quot;;letter-spacing:0.616px;">Humidity</div>
<div id="tx66" class="t" style="left:1363.00px;top:1374.89px;font-size:16.2px;font-weight:400;color:#424242;-webkit-text-stroke:0.356px #424242;font-family:&quot;Liberation Sans&quot;;letter-spacing:0.186px;">Remove</div>
<div id="tx67" class="t" style="left:743.10px;top:1432.59px;font-size:16.2px;font-weight:400;color:#424242;-webkit-text-stroke:0.356px #424242;font-family:&quot;Liberation Sans&quot;;letter-spacing:0.852px;">Add datapoint</div>
<div id="tx68" class="t" style="left:697.00px;top:1482.49px;font-size:16.2px;font-weight:400;color:#242424;-webkit-text-stroke:0.356px #242424;font-family:&quot;Liberation Sans&quot;;letter-spacing:0.456px;">Description</div>
<div id="tx69" class="t" style="left:712.20px;top:1524.09px;font-size:16.2px;font-weight:400;color:#707070;font-family:&quot;Liberation Sans&quot;;letter-spacing:0.183px;">Enter description</div>
<div id="tx70" class="t" style="left:1602.40px;top:10.12px;font-size:12.5px;font-weight:400;color:#424242;font-family:&quot;Liberation Sans&quot;;letter-spacing:0.000px;-webkit-text-stroke:0.3px #424242;">1</div>
</body></html>
